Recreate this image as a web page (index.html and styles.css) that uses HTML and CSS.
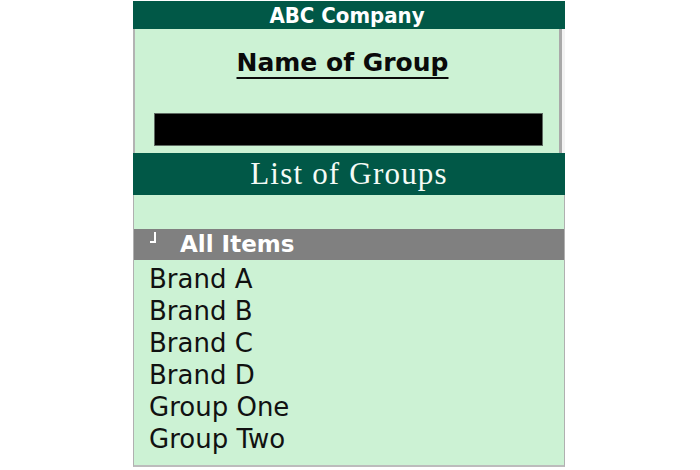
FILE: index.html
```html
<!DOCTYPE html>
<html lang="en">
<head>
<meta charset="utf-8">
<title>List of Groups</title>
<link rel="stylesheet" href="styles.css">
</head>
<body>
<div class="panel">
  <div class="company">ABC Company</div>
  <div class="form">
    <div class="title"><span class="title-text">Name of Group</span></div>
    <div class="field"></div>
  </div>
  <div class="list-head">List of Groups</div>
  <div class="list">
    <div class="spacer"></div>
    <div class="row-selected"><span class="corner"></span><span class="sel-text">All Items</span></div>
    <ul class="items">
      <li>Brand A</li>
      <li>Brand B</li>
      <li>Brand C</li>
      <li>Brand D</li>
      <li>Group One</li>
      <li>Group Two</li>
    </ul>
  </div>
</div>
</body>
</html>
```

FILE: styles.css
```css
* {
  box-sizing: border-box;
}

html, body {
  margin: 0;
  padding: 0;
  background: #ffffff;
}

body {
  font-family: "DejaVu Sans", "Liberation Sans", sans-serif;
}

.panel {
  width: 432px;
  margin: 1px 0 0 133px;
  display: flex;
  flex-direction: column;
}

.company {
  height: 28px;
  padding: 2px 4px 0 0;
  background: #015847;
  color: #ffffff;
  font-family: "DejaVu Sans Condensed", "DejaVu Sans", sans-serif;
  font-stretch: condensed;
  font-weight: bold;
  font-size: 22px;
  line-height: 26px;
  text-align: center;
}

.form {
  height: 124px;
  background: #ccf2d4;
  border-left: 2px solid #b3b3b3;
  border-right: 3px solid #f3f3f3;
  box-shadow: inset -3px 0 0 #a9a9a9;
  padding: 19px 0 7px 0;
  display: flex;
  flex-direction: column;
}

.title {
  height: 30px;
  padding-right: 12px;
  text-align: center;
  font-weight: bold;
  font-size: 25px;
  line-height: 30px;
  color: #0a0a0a;
}

.title-text {
  text-decoration: underline;
  text-decoration-thickness: 2px;
  text-underline-offset: 6px;
}

.field {
  height: 33px;
  margin: 35px 19px 0 19px;
  background: #000000;
  border: 1px solid #5e6a62;
}

.list-head {
  height: 42px;
  background: #015847;
  color: #f4fbf6;
  font-family: "Liberation Serif", "DejaVu Serif", serif;
  font-size: 31px;
  letter-spacing: 1.2px;
  line-height: 42px;
  text-align: center;
}

.list {
  background: #ccf2d4;
  border-left: 1px solid #b0b0b0;
  border-right: 1px solid #b0b0b0;
  border-bottom: 2px solid #bcbcbc;
  padding-bottom: 10px;
}

.spacer {
  height: 34px;
}

.row-selected {
  height: 31px;
  background: #808080;
  color: #ffffff;
  display: flex;
  align-items: flex-start;
  padding-left: 16px;
}

.corner {
  width: 6px;
  height: 11px;
  margin-top: 3px;
  margin-right: 24px;
  border-right: 2px solid #ffffff;
  border-bottom: 2px solid #ffffff;
  flex-shrink: 0;
}

.sel-text {
  font-weight: bold;
  font-size: 23px;
  line-height: 31px;
}

.items {
  list-style: none;
  margin: 0;
  padding: 3px 0 0 15px;
}

.items li {
  font-size: 26px;
  line-height: 32px;
  height: 32px;
  color: #111111;
}
```
